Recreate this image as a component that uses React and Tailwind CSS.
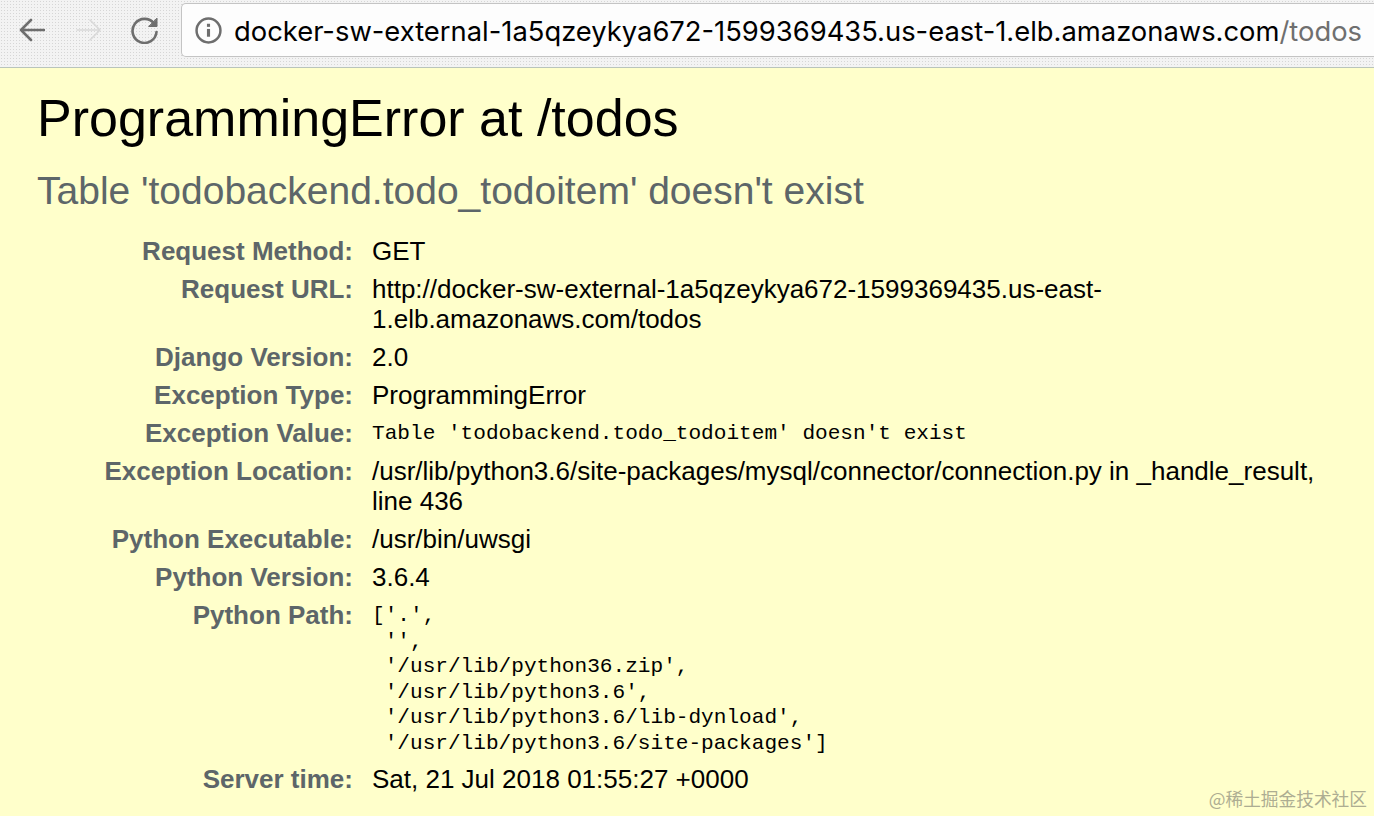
import React from "react";

const rows = [
  { label: "Request Method:", value: "GET" },
  {
    label: "Request URL:",
    value: (
      <>
        http://docker-sw-external-1a5qzeykya672-1599369435.us-east-
        <br />
        1.elb.amazonaws.com/todos
      </>
    ),
  },
  { label: "Django Version:", value: "2.0" },
  { label: "Exception Type:", value: "ProgrammingError" },
  {
    label: "Exception Value:",
    mono: true,
    value: "Table 'todobackend.todo_todoitem' doesn't exist",
  },
  {
    label: "Exception Location:",
    value: (
      <>
        /usr/lib/python3.6/site-packages/mysql/connector/connection.py in _handle_result,
        <br />
        line 436
      </>
    ),
  },
  { label: "Python Executable:", value: "/usr/bin/uwsgi" },
  { label: "Python Version:", value: "3.6.4" },
  {
    label: "Python Path:",
    mono: true,
    value: `['.',
 '',
 '/usr/lib/python36.zip',
 '/usr/lib/python3.6',
 '/usr/lib/python3.6/lib-dynload',
 '/usr/lib/python3.6/site-packages']`,
  },
  { label: "Server time:", value: "Sat, 21 Jul 2018 01:55:27 +0000" },
];

function Toolbar() {
  return (
    <div className="h-[68px] pb-[7px] flex items-center bg-[#f3f3f3] bg-[radial-gradient(#d6d6d6_0.6px,transparent_0.7px)] bg-[length:3px_3px] border-b border-[#b9c4bb]">
      <div className="w-[181px] shrink-0 flex items-center pl-[19px]">
        <svg width="26" height="26" viewBox="0 0 26 26" fill="none" stroke="#6e6e6e" strokeWidth="2.6" strokeLinecap="round" strokeLinejoin="round">
          <path d="M25 13H2M12 3L2 13l10 10" />
        </svg>
        <svg className="ml-[31px]" width="26" height="26" viewBox="0 0 26 26" fill="none" stroke="#d9d9d9" strokeWidth="1.6" strokeLinecap="round" strokeLinejoin="round">
          <path d="M1 13h23M14 3l10 10-10 10" />
        </svg>
        <svg className="ml-[29px]" width="28" height="28" viewBox="0 0 28 28" fill="none" stroke="#6e6e6e" strokeWidth="2.6" strokeLinecap="round">
          <path d="M23 7.5A12 12 0 1 0 25.5 16" />
          <path d="M26 2.5V10.5H18Z" fill="#6e6e6e" strokeWidth="1" strokeLinejoin="round" />
        </svg>
      </div>
      <div className="flex-1 h-[54px] flex items-center bg-[#fdfdfd] border border-[#c4c4c4] border-r-0 rounded-l-[5px] pl-[13px]">
        <svg width="27" height="27" viewBox="0 0 26 26" fill="none" stroke="#6e6e6e">
          <circle cx="13" cy="13" r="11.5" strokeWidth="2.4" />
          <path d="M13 11.5v7.5" strokeWidth="3" />
          <path d="M13 6.5v3" strokeWidth="3" />
        </svg>
        <span className="ml-[12px] pt-[3px] text-[27.36px] leading-none text-black whitespace-nowrap font-['Inter',sans-serif]">
          docker-sw-external-1a5qzeykya672-1599369435.us-east-1.elb.amazonaws.com
          <span className="text-[#6f6f6f]">/todos</span>
        </span>
      </div>
    </div>
  );
}

export default function App() {
  return (
    <div className="relative w-[1374px] h-[816px] overflow-hidden bg-[#ffffcb] font-['Liberation_Sans',sans-serif] text-black">
      <Toolbar />
      <div className="pl-[37px] pt-[21px]">
        <h1 className="text-[52px] leading-[58px] font-normal">ProgrammingError at /todos</h1>
        <h2 className="mt-[21px] text-[39px] leading-[46px] font-normal text-[#5d6669]">
          Table 'todobackend.todo_todoitem' doesn't exist
        </h2>
      </div>
      <div className="mt-[18px] grid grid-cols-[353px_1fr] text-[26px] leading-[30px]">
        {rows.map((row) => (
          <React.Fragment key={row.label}>
            <div className="py-1 text-right font-bold text-[#5d6669]">{row.label}</div>
            <div className="py-1 pl-[19px] pr-[40px]">
              {row.mono ? (
                <pre className="font-['Liberation_Mono',monospace] text-[21.1px] leading-[25.6px] pt-[3px] mb-[-1px]">{row.value}</pre>
              ) : (
                row.value
              )}
            </div>
          </React.Fragment>
        ))}
      </div>
      <div className="absolute right-[7px] bottom-[6px] text-[17.7px] leading-6 text-[#adad92] font-['Noto_Sans_CJK_SC',sans-serif]">
        @稀土掘金技术社区
      </div>
    </div>
  );
}
